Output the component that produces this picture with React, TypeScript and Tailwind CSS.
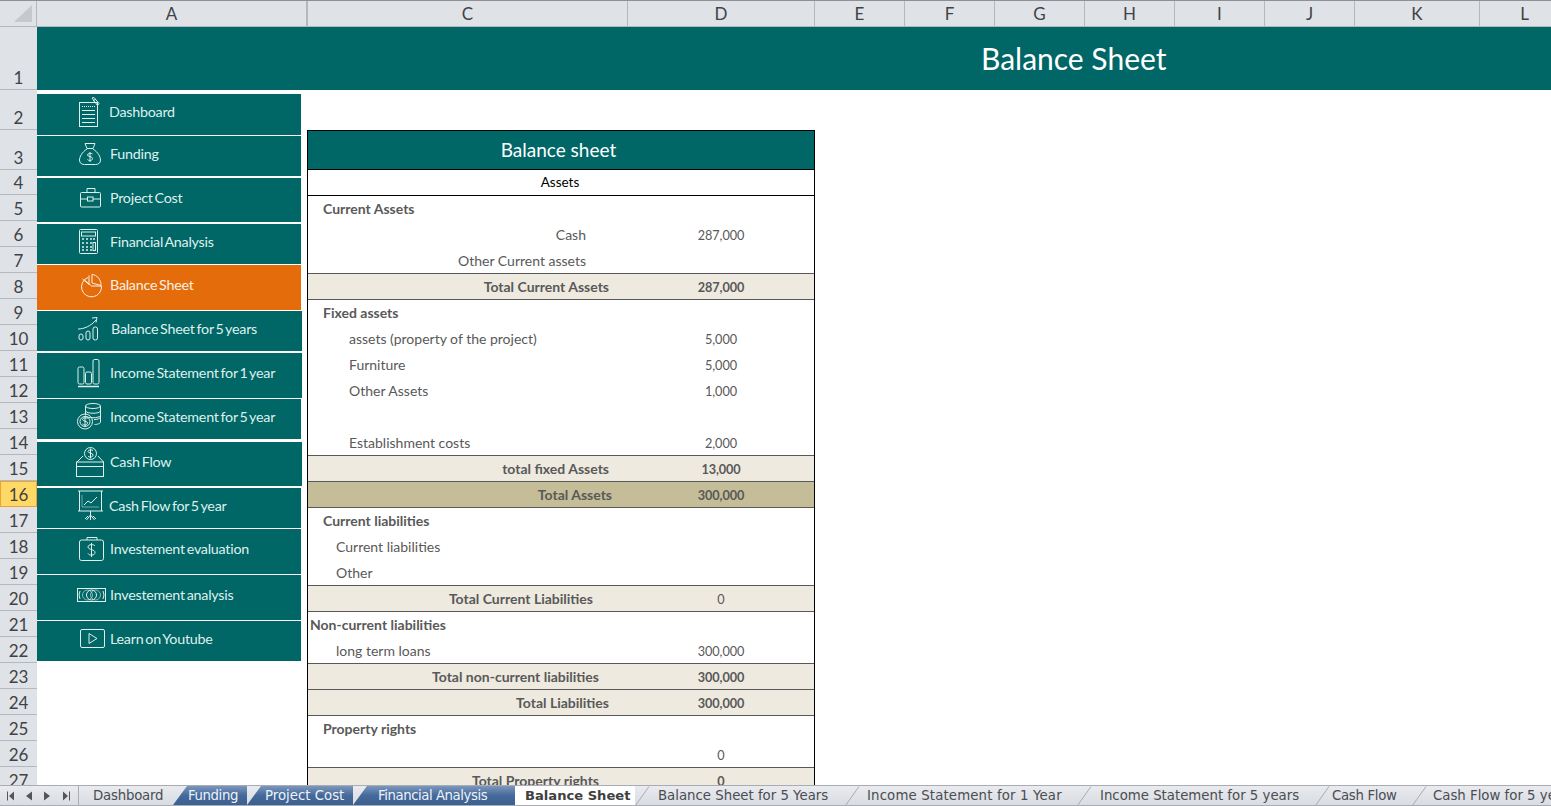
import type { ReactNode } from "react";

const columns = [
  { name: "A", w: "w-[271px]" },
  { name: "C", w: "w-[320px]" },
  { name: "D", w: "w-[187px]" },
  { name: "E", w: "w-[90px]" },
  { name: "F", w: "w-[90px]" },
  { name: "G", w: "w-[90px]" },
  { name: "H", w: "w-[90px]" },
  { name: "I", w: "w-[90px]" },
  { name: "J", w: "w-[90px]" },
  { name: "K", w: "w-[125px]" },
  { name: "L", w: "w-[90px]" },
];

const rowHeights = [
  "h-[63px]", "h-[40px]", "h-[40px]", "h-[25px]",
  ...Array.from({ length: 23 }, () => "h-[26px]"),
];

function Svg({ w, h, children }: { w: number; h: number; children: ReactNode }) {
  return (
    <svg width={w} height={h} viewBox={`0 0 ${w} ${h}`} fill="none" stroke="currentColor" strokeWidth="1" className="shrink-0 overflow-visible">
      {children}
    </svg>
  );
}

const Dollar = ({ x, y }: { x: number; y: number }) => (
  <path d={`M${x + 2.5} ${y - 3}c-1-1-5-1-5 1s5 1 5 3.500-4 2.500-5 1M${x} ${y - 5}v10`} />
);

const icons: Record<string, ReactNode> = {
  dashboard: (
    <Svg w={21} h={30}>
      <rect x="0.500" y="5.500" width="18" height="24" />
      <path d="M3 9.500h13" strokeDasharray="1 1" />
      <path d="M3 13.500h13M3 17.500h13M3 21.500h13M3 25.500h13" />
      <path d="M13 1l2-.5 5 6-1.500 2zM14 4l3-2" />
    </Svg>
  ),
  funding: (
    <Svg w={22} h={22}>
      <path d="M6 .5h10l-2 5H8zM8 5.500h6" />
      <path d="M8 6C3 9 .5 14 .5 17c0 3 2 4.500 5 4.500h11c3 0 5-1.500 5-4.500 0-3-2.500-8-7.500-11" />
      <Dollar x={11} y={14} />
    </Svg>
  ),
  project: (
    <Svg w={22} h={20}>
      <path d="M7 4V.5h8V4" />
      <rect x="0.500" y="4.500" width="20" height="14.500" rx="1" />
      <path d="M.5 11h7M13 11h7.500" />
      <rect x="7.500" y="9" width="5.500" height="4" />
    </Svg>
  ),
  financial: (
    <Svg w={19} h={25}>
      <rect x="0.500" y="0.500" width="18" height="24" rx="1" />
      <rect x="2.500" y="3" width="14" height="4" />
      <path d="M3 10h2M7 10h2M11 10h2M14 10h2M3 14h2M7 14h2M11 14h2M3 18h2M7 18h2M3 21h2M7 21h2M11 18h2M11 21h2" strokeWidth="1.500" />
      <rect x="14" y="13.500" width="2.500" height="8" />
    </Svg>
  ),
  balance: (
    <Svg w={23} h={22}>
      <path d="M9 3.500A10 10 0 1 0 22.500 12H12.500L5.500 6" />
      <path d="M13 .5v8.500l9 2.500c.5-5-4-11-9-11z" />
      <path d="M10 1.500v9L3.500 5" />
    </Svg>
  ),
  balance5: (
    <Svg w={21} h={24}>
      <path d="M0 12c6 0 13-3 18-9M14 1l5-.5-1 5" />
      <rect x="1" y="17" width="4" height="6" rx="2" />
      <rect x="8" y="14" width="4" height="9" rx="2" />
      <rect x="15" y="10" width="4.500" height="13" rx="2" />
    </Svg>
  ),
  income1: (
    <Svg w={23} h={28}>
      <rect x="1" y="8" width="6" height="17" rx="1.500" />
      <rect x="8.500" y="13" width="6" height="12" rx="1.500" />
      <rect x="16" y="0.500" width="6" height="24.500" rx="1.500" />
      <path d="M1 27.500h21" strokeWidth="1.500" />
    </Svg>
  ),
  income5: (
    <Svg w={25} h={27}>
      <ellipse cx="16" cy="3" rx="7.500" ry="2.500" />
      <path d="M8.500 3v9M23.500 3v16c0 1.500-3 2.500-6 2.500M8.500 8c1 3 14 3 15 0M8.500 12.500c1 3 14 3 15 0M17 16.500c3 0 6-.5 6.500-2.500" />
      <circle cx="8" cy="18.500" r="7.500" />
      <circle cx="8" cy="18.500" r="5" />
      <Dollar x={8} y={18.500} />
    </Svg>
  ),
  cash: (
    <Svg w={28} h={30}>
      <circle cx="14.500" cy="6.500" r="6" />
      <Dollar x={14.500} y={6.500} />
      <path d="M7 9 1 15M22 9l5.500 6" />
      <path d="M.5 19.500h27" />
      <rect x="0.500" y="15" width="27" height="14.500" />
    </Svg>
  ),
  cash5: (
    <Svg w={26} h={31}>
      <path d="M0 1h25M1.500 1v20M23.500 1v20M0 21h25" />
      <path d="M6 15l4-4 3 2 6-6" />
      <path d="M4 17V5M4 17h17" strokeOpacity="0.500" />
      <path d="M12.500 21v9M12.500 25l-4 5M12.500 25l4 5M10 26l-3 3M15 26l3 3" />
    </Svg>
  ),
  evaluation: (
    <Svg w={25} h={24}>
      <path d="M8 3V.5h10V3" />
      <rect x="0.500" y="3" width="24" height="20.500" rx="2" />
      <path d="M16 9c-1-2-7-2-7 1s7 2 7 5.500-6 3-7 1M12.500 6v14" />
    </Svg>
  ),
  analysis: (
    <Svg w={29} h={14}>
      <rect x="0.500" y="0.500" width="28" height="13" />
      <circle cx="14.500" cy="7" r="5" />
      <circle cx="10.500" cy="7" r="5" strokeOpacity="0.600" />
      <circle cx="18.500" cy="7" r="5" strokeOpacity="0.600" />
      <path d="M3 3 2 7l1 4M26 3l1 4-1 4" />
    </Svg>
  ),
  youtube: (
    <Svg w={25} h={19}>
      <rect x="0.500" y="0.500" width="24" height="18" rx="1.500" />
      <path d="M9 4.500v10l8-5z" />
    </Svg>
  ),
};

const navItems = [
  { label: "Dashboard", icon: "dashboard", box: "mt-[4px] h-[41px] w-[264px]", left: "ml-[42px]", gap: "ml-[9px]" },
  { label: "Funding", icon: "funding", box: "mt-[1px] h-[40px] w-[264px]", left: "ml-[42px]", gap: "ml-[9px]" },
  { label: "Project Cost", icon: "project", box: "mt-[2px] h-[44px] w-[264px]", left: "ml-[43px]", gap: "ml-[8px]" },
  { label: "Financial Analysis", icon: "financial", box: "mt-[2px] h-[40px] w-[264px]", left: "ml-[42px]", gap: "ml-[12px]" },
  { label: "Balance Sheet", icon: "balance", box: "mt-[1px] h-[45px] w-[264px] bg-[#e46c0a]", left: "ml-[42px]", gap: "ml-[8px]" },
  { label: "Balance Sheet for 5 years", icon: "balance5", box: "mt-[1px] h-[40px] w-[265px]", left: "ml-[41px]", gap: "ml-[12px]" },
  { label: "Income Statement for 1 year", icon: "income1", box: "mt-[2px] h-[45px] w-[265px]", left: "ml-[40px]", gap: "ml-[10px]" },
  { label: "Income Statement for 5 year", icon: "income5", box: "mt-[1px] h-[40px] w-[264px]", left: "ml-[40px]", gap: "ml-[8px]" },
  { label: "Cash Flow", icon: "cash", box: "mt-[3px] h-[44px] w-[265px]", left: "ml-[39px]", gap: "ml-[6px]" },
  { label: "Cash Flow for 5 year", icon: "cash5", box: "mt-[2px] h-[40px] w-[264px]", left: "ml-[41px]", gap: "ml-[5px]" },
  { label: "Investement evaluation", icon: "evaluation", box: "mt-[1px] h-[45px] w-[264px]", left: "ml-[42px]", gap: "ml-[6px]" },
  { label: "Investement analysis", icon: "analysis", box: "mt-[1px] h-[45px] w-[264px]", left: "ml-[40px]", gap: "ml-[4px]" },
  { label: "Learn on Youtube", icon: "youtube", box: "mt-[1px] h-[40px] w-[264px]", left: "ml-[43px]", gap: "ml-[5px]" },
];

type Row = {
  label?: string;
  value?: string;
  pad?: string;
  bold?: boolean;
  plainValue?: boolean;
  fill?: string;
  line?: boolean;
};

const rows: Row[] = [
  { label: "Current Assets", pad: "text-left pl-[15px]", bold: true },
  { label: "Cash", value: "287,000", pad: "text-right pr-[42px]" },
  { label: "Other Current assets", pad: "text-right pr-[42px]", line: true },
  { label: "Total Current Assets", value: "287,000", pad: "text-right pr-[19px]", bold: true, fill: "bg-[#eeeae0]", line: true },
  { label: "Fixed assets", pad: "text-left pl-[15px]", bold: true },
  { label: "assets (property of the project)", value: "5,000", pad: "text-left pl-[41px]" },
  { label: "Furniture", value: "5,000", pad: "text-left pl-[41px]" },
  { label: "Other Assets", value: "1,000", pad: "text-left pl-[41px]" },
  {},
  { label: "Establishment costs", value: "2,000", pad: "text-left pl-[41px]", line: true },
  { label: "total fixed Assets", value: "13,000", pad: "text-right pr-[19px]", bold: true, fill: "bg-[#eeeae0]", line: true },
  { label: "Total Assets", value: "300,000", pad: "text-right pr-[16px]", bold: true, fill: "bg-[#c4bd97]", line: true },
  { label: "Current liabilities", pad: "text-left pl-[15px]", bold: true },
  { label: "Current liabilities", pad: "text-left pl-[28px]" },
  { label: "Other", pad: "text-left pl-[28px]", line: true },
  { label: "Total Current Liabilities", value: "0", plainValue: true, pad: "text-right pr-[35px]", bold: true, fill: "bg-[#eeeae0]", line: true },
  { label: "Non-current liabilities", pad: "text-left pl-[2px]", bold: true },
  { label: "long term loans", value: "300,000", pad: "text-left pl-[28px]", line: true },
  { label: "Total non-current liabilities", value: "300,000", pad: "text-right pr-[29px]", bold: true, fill: "bg-[#eeeae0]", line: true },
  { label: "Total Liabilities", value: "300,000", pad: "text-right pr-[19px]", bold: true, fill: "bg-[#eeeae0]", line: true },
  { label: "Property rights", pad: "text-left pl-[15px]", bold: true },
  { value: "0", line: true },
  { label: "Total Property rights", value: "0", pad: "text-right pr-[29px]", bold: true, fill: "bg-[#eeeae0]", line: true },
];

const tabs = [
  { label: "Dashboard", w: "w-[94px]", pad: "pl-[14px] tracking-[-0.2px]", kind: "plain" },
  { label: "Funding", w: "w-[74px]", pad: "pl-[15px] tracking-[-0.4px]", kind: "blue" },
  { label: "Project Cost", w: "w-[106px]", pad: "pl-[18px]", kind: "blue" },
  { label: "Financial Analysis", w: "w-[162px]", pad: "pl-[25px] tracking-[-0.45px]", kind: "blue" },
  { label: "Balance Sheet", w: "w-[120px]", pad: "pl-[10px]", kind: "active" },
  { label: "Balance Sheet for 5 Years", w: "w-[210px]", pad: "pl-[23px]", kind: "plain" },
  { label: "Income Statement for 1 Year", w: "w-[232px]", pad: "pl-[22px] tracking-[0.15px]", kind: "plain" },
  { label: "Income Statement for 5 years", w: "w-[238px]", pad: "pl-[23px]", kind: "plain" },
  { label: "Cash Flow", w: "w-[97px]", pad: "pl-[17px] tracking-[-0.3px]", kind: "plain" },
  { label: "Cash Flow for 5 years", w: "w-[180px]", pad: "pl-[21px]", kind: "plain" },
];

function SheetTab({ tab, first }: { tab: (typeof tabs)[number]; first: boolean }) {
  const look =
    tab.kind === "blue"
      ? "bg-linear-to-b from-[#7b97bc] via-[#45699a] to-[#3b6190] text-[#eef3f8] [clip-path:polygon(14px_0,100%_0,100%_100%,0_100%)]"
      : tab.kind === "active"
        ? "bg-white text-[#404040] font-bold text-[13.100px]"
        : "text-[#4a4d52]";
  return (
    <div className={`relative h-full shrink-0 ${tab.w}`}>
      <div className={`flex h-full items-center whitespace-nowrap ${tab.pad} ${look}`}>{tab.label}</div>
      {!first && tab.kind === "plain" && (
        <svg width="16" height="20" viewBox="0 0 16 20" fill="none" className="absolute left-0 top-0">
          <path d="M0.500 19.500 14 0.500" stroke="#a8acb2" />
        </svg>
      )}
    </div>
  );
}

export default function App() {
  return (
    <div className="flex h-[806px] w-[1551px] flex-col overflow-hidden bg-white [font-family:Lato,sans-serif]">
      {/* column letters */}
      <div className="flex h-[27px] shrink-0 border-t border-[#8e9094] bg-[#dfe2e7]">
        <div className="flex w-[37px] shrink-0 items-end justify-end border-b border-r border-[#b4b7bc] p-[4px]">
          <div className="h-[17px] w-[18px] bg-[#c5c8cd] [clip-path:polygon(100%_0,100%_100%,0_100%)]" />
        </div>
        {columns.map((c, i) => (
          <div
            key={c.name}
            className={`flex shrink-0 items-center justify-center border-b border-r border-[#b4b7bc] text-[17px] text-[#3f4246] ${c.w} ${i === 0 ? "border-r-2" : ""}`}
          >
            {c.name}
          </div>
        ))}
      </div>

      <div className="flex min-h-0 flex-1">
        {/* row numbers */}
        <div className="w-[37px] shrink-0 overflow-hidden bg-[#dfe2e7] text-[17px] text-[#3f4246]">
          {rowHeights.map((h, i) => (
            <div
              key={i}
              className={`flex items-end justify-center leading-[23px] ${h} ${
                i === 15 ? "border border-[#e8a33d] bg-[#ffd966]" : "border-b border-[#b4b7bc]"
              }`}
            >
              {i + 1}
            </div>
          ))}
        </div>

        <div className="flex min-w-0 flex-1 flex-col overflow-hidden">
          <div className="flex h-[63px] shrink-0 items-center bg-[#006666] pl-[944px] text-[30px] text-white">
            Balance Sheet
          </div>

          <div className="flex min-h-0 flex-1">
            {/* navigation buttons */}
            <div className="w-[270px] shrink-0 text-[14.300px] tracking-[-0.25px] [word-spacing:-1.500px]">
              {navItems.map((item) => (
                <div
                  key={item.label}
                  className={`flex items-center pb-[5px] ${item.box} ${
                    item.label === "Balance Sheet" ? "text-[#fdf0e4]" : "bg-[#006666] text-[#dff0ed]"
                  }`}
                >
                  <div className={`flex items-center ${item.left}`}>{icons[item.icon]}</div>
                  <span className={`whitespace-nowrap ${item.gap}`}>{item.label}</span>
                </div>
              ))}
            </div>

            {/* balance sheet table */}
            <div className="mt-[40px] w-[508px] shrink-0 border-x border-t border-black text-[14px] text-[#595959]">
              <div className="flex h-[39px] items-center justify-center border-b border-black bg-[#006666] pr-[5px] text-[19px] text-white">
                Balance sheet
              </div>
              <div className="flex h-[26px] items-center justify-center border-b border-black pr-[2px] text-[13.500px] text-black">Assets</div>
              {rows.map((row, i) => (
                <div
                  key={i}
                  className={`flex h-[26px] items-center border-b ${row.fill ?? ""} ${row.line ? "border-[#595959]" : "border-transparent"}`}
                >
                  <div className={`w-[320px] shrink-0 whitespace-nowrap ${row.bold ? "font-bold" : ""} ${row.pad ?? ""}`}>
                    {row.label}
                  </div>
                  <div
                    className={`w-[186px] shrink-0 pt-[2px] text-center text-[12.700px] tracking-[-0.1px] ${
                      row.bold && !row.plainValue ? "font-bold" : ""
                    }`}
                  >
                    {row.value}
                  </div>
                </div>
              ))}
            </div>
          </div>
        </div>
      </div>

      {/* sheet tabs */}
      <div className="flex h-[21px] shrink-0 border-y border-[#a9adb3] bg-linear-to-b from-[#e9ebef] to-[#d9dce1] text-[13.300px] [font-family:'DejaVu_Sans',sans-serif]">
        <div className="flex w-[79px] shrink-0 items-center border-r border-[#a9adb3] pl-[6px] text-[#555]">
          <svg width="70" height="12" viewBox="0 0 70 12" fill="currentColor">
            <path d="M1 1.500h1v9H1zM8 1.500v9L3 6zM26 1.500v9L20 6zM38 1.500v9L44 6zM57 1.500v9L62 6zM63 1.500h1v9h-1z" />
          </svg>
        </div>
        {tabs.map((tab, i) => (
          <SheetTab key={tab.label} tab={tab} first={i === 0} />
        ))}
      </div>
    </div>
  );
}
